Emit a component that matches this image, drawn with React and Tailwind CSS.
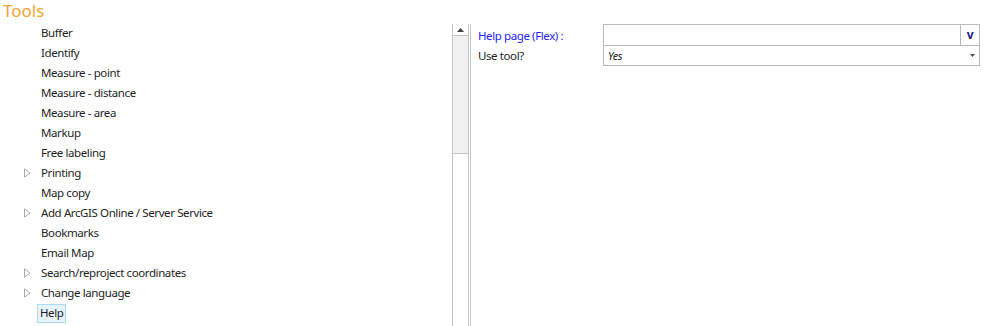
import React from "react";

const items = [
  { t: "Buffer" },
  { t: "Identify" },
  { t: "Measure - point" },
  { t: "Measure - distance" },
  { t: "Measure - area" },
  { t: "Markup" },
  { t: "Free labeling" },
  { t: "Printing", exp: true },
  { t: "Map copy" },
  { t: "Add ArcGIS Online / Server Service", exp: true },
  { t: "Bookmarks" },
  { t: "Email Map" },
  { t: "Search/reproject coordinates", exp: true },
  { t: "Change language", exp: true },
  { t: "Help", sel: true },
];

function Tri() {
  return (
    <svg width="7" height="10" viewBox="0 0 7 10" className="block">
      <path d="M0.5 0.8 L6 5 L0.5 9.2 Z" fill="white" stroke="#a6a6a6" strokeWidth="1" />
    </svg>
  );
}

export default function App() {
  return (
    <div
      className="w-[983px] h-[326px] bg-white overflow-hidden text-[11.5px] tracking-[-0.4px] text-[#1e1e1e]"
      style={{ fontFamily: '"Noto Sans", "Open Sans", sans-serif' }}
    >
      <div className="h-[24px] pl-[3px] pt-[1px] text-[17px] tracking-normal leading-[20px] text-[#f5a332]">Tools</div>
      <div className="flex h-[302px]">
        <div className="w-[452px] -mt-[1px]">
          {items.map((it) => (
            <div key={it.t} className="h-[20px] flex items-center">
              <div className="w-[38px] flex justify-end pr-[7px]">{it.exp ? <Tri /> : null}</div>
              {it.sel ? (
                <div className="h-[19px] px-[2px] flex items-center bg-[#e5f3fb] border border-[#a9dbf6] -ml-[1px] leading-none">
                  {it.t}
                </div>
              ) : (
                <div className="leading-none pl-[3px]">{it.t}</div>
              )}
            </div>
          ))}
        </div>
        <div className="w-[17px] flex flex-col border-x border-[#c4c4c4]">
          <div className="h-[12px] border-b border-[#c4c4c4] bg-white flex items-center justify-center">
            <svg width="7" height="4" viewBox="0 0 7 4">
              <path d="M0 4 L3.5 0 L7 4 Z" fill="#404040" />
            </svg>
          </div>
          <div className="h-[118px] bg-[#f0f0f0] border-b border-[#c4c4c4]" />
          <div className="flex-1 bg-white" />
        </div>
        <div className="w-[1px] ml-[1px] bg-[#c4c4c4]" />
        <div className="flex-1 pl-[7px] pr-[3px]">
          <div className="flex h-[21px]">
            <div className="w-[125px] flex items-center pt-[3px] text-[#2323ff] leading-none">Help page (Flex) :</div>
            <div className="flex-1 flex border border-[#b9b9b9] border-b-0">
              <div className="flex-1 border-r border-[#b9b9b9]" />
              <div className="w-[18px] flex items-center justify-center text-[12px] font-bold text-[#1c1c80] leading-none">
                v
              </div>
            </div>
          </div>
          <div className="flex h-[21px]">
            <div className="w-[125px] flex items-center leading-none">Use tool?</div>
            <div className="flex-1 flex items-center border border-[#b9b9b9] pl-[4px] pr-[4px]">
              <span className="flex-1 italic leading-none text-[11px]">Yes</span>
              <svg width="5" height="3" viewBox="0 0 5 3">
                <path d="M0 0 L5 0 L2.5 3 Z" fill="#505050" />
              </svg>
            </div>
          </div>
        </div>
      </div>
    </div>
  );
}
